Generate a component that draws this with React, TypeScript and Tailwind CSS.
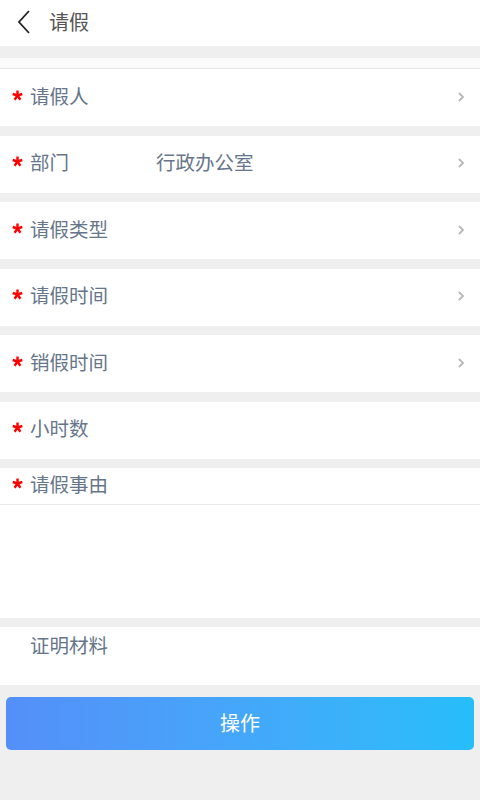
import * as React from 'react';

const font = { fontFamily: '"Noto Sans CJK SC", "Noto Sans", sans-serif' };

function Chevron() {
  return (
    <svg width="8" height="12" viewBox="0 0 8 12" className="mt-[2px] shrink-0">
      <path d="M2 2 L6 6 L2 10" fill="none" stroke="#b8b8b8" strokeWidth="1.8" />
    </svg>
  );
}

function Star() {
  return (
    <svg width="11" height="11" viewBox="-0.5 -0.5 11 11" className="mr-[7px] mb-[1px] shrink-0">
      <g stroke="#ff0000" strokeWidth="2.4" strokeLinecap="butt">
        <line x1="5" y1="5.2" x2="5" y2="0" />
        <line x1="5" y1="5" x2="9.8" y2="3.5" />
        <line x1="5" y1="5" x2="7.9" y2="9.2" />
        <line x1="5" y1="5" x2="2.1" y2="9.2" />
        <line x1="5" y1="5" x2="0.2" y2="3.5" />
      </g>
    </svg>
  );
}

function Row({label, value, arrow = true}: {label: string; value?: string; arrow?: boolean}) {
  return (
    <div className="flex h-[57px] items-center bg-white pb-[4px] pl-[12px] pr-[15px]">
      <Star />
      <span className="w-[126px] text-[19.5px] text-[#66768a]">{label}</span>
      <span className="flex-1 text-[19.5px] text-[#66768a]">{value}</span>
      {arrow && <Chevron />}
    </div>
  );
}

export default function App() {
  return (
    <div className="flex h-[800px] w-[480px] flex-col bg-[#efefef]" style={font}>
      <div className="flex h-[46px] items-center bg-white pb-[2px] pl-[17px]">
        <svg width="14" height="24" viewBox="0 0 14 24">
          <path d="M12 1 L2 12 L12 23" fill="none" stroke="#222" strokeWidth="1.8" />
        </svg>
        <span className="ml-[18px] text-[20px] text-[#555555]">请假</span>
      </div>
      <div className="mt-[12px] h-[11px] border-b border-[#e6e6e6] bg-[#fbfbfb]" />
      <div className="flex flex-col gap-[9.5px]">
        <Row label="请假人" />
        <Row label="部门" value="行政办公室" />
        <Row label="请假类型" />
        <Row label="请假时间" />
        <Row label="销假时间" />
        <Row label="小时数" arrow={false} />
      </div>
      <div className="mt-[9px] bg-white">
        <div className="flex h-[37px] items-center border-b border-[#e8e8e8] pb-[3px] pl-[12px]">
          <Star />
          <span className="text-[19.5px] text-[#66768a]">请假事由</span>
        </div>
        <div className="h-[113px]" />
      </div>
      <div className="mt-[9px] flex h-[58px] items-start bg-white pl-[30px] pt-[3px]">
        <span className="text-[19.5px] text-[#66768a]">证明材料</span>
      </div>
      <div className="mx-[6px] mt-[12px] flex h-[53px] items-center justify-center rounded-[5px] bg-gradient-to-r from-[#548ff9] to-[#26befa]">
        <span className="text-[20px] text-white">操作</span>
      </div>
    </div>
  );
}
